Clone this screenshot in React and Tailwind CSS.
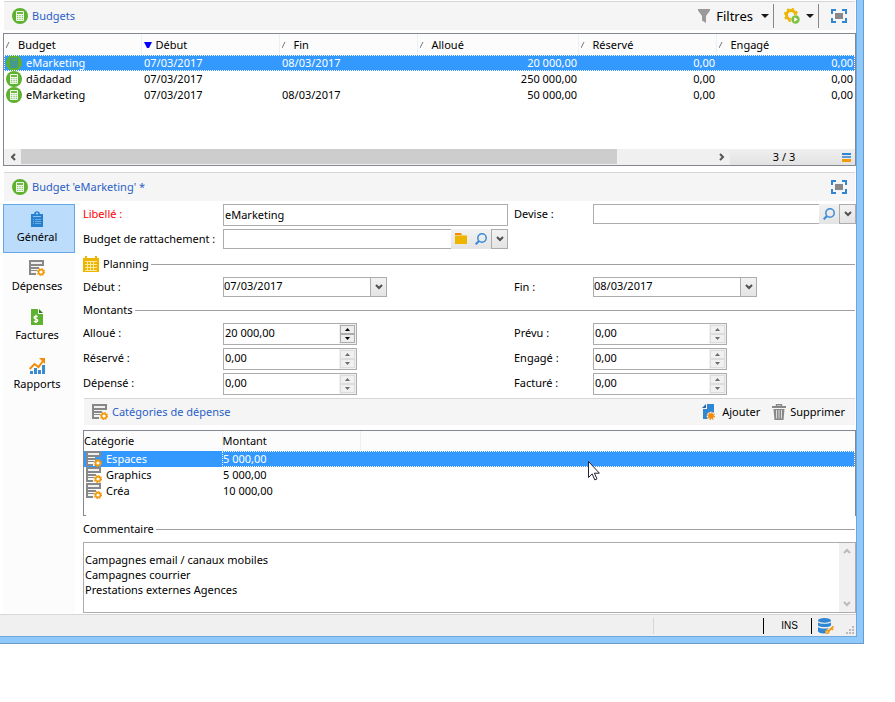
import React, { useState } from 'react';

/* ---------- Icons ---------- */

const CalculatorIcon = ({ dim = false }) => (
  <svg className="w-4 h-4 shrink-0" viewBox="0 0 16 16" aria-hidden="true">
    <circle cx="8" cy="8" r="8" fill="#5fb130" />
    <rect x="4" y="3" width="8" height="10" rx="1" fill={dim ? '#3f93a0' : '#f2faee'} />
    <rect x="5" y="4" width="6" height="2" fill={dim ? '#55a858' : '#6fba45'} />
    <g fill={dim ? '#55a858' : '#8cc96a'}>
      <rect x="5" y="7" width="1.3" height="1.2" />
      <rect x="7.4" y="7" width="1.3" height="1.2" />
      <rect x="9.7" y="7" width="1.3" height="1.2" />
      <rect x="5" y="9" width="1.3" height="1.2" />
      <rect x="7.4" y="9" width="1.3" height="1.2" />
      <rect x="9.7" y="9" width="1.3" height="1.2" />
      <rect x="5" y="11" width="1.3" height="1" />
      <rect x="7.4" y="11" width="1.3" height="1" />
      <rect x="9.7" y="11" width="1.3" height="1" />
    </g>
  </svg>
);

const FunnelIcon = () => (
  <svg className="w-3 h-4" viewBox="0 0 12 16" aria-hidden="true">
    <path d="M0 1h12v1.5L8 8v7l-4-2.5V8L0 2.5z" fill="#999" />
  </svg>
);

const Caret = () => (
  <svg className="w-2 h-1" viewBox="0 0 8 4" aria-hidden="true">
    <path d="M0 0h8L4 4z" fill="#1a1a1a" />
  </svg>
);

const GearPlayIcon = () => (
  <svg className="w-4 h-4" viewBox="0 0 16 16" aria-hidden="true">
    <circle cx="7" cy="7" r="4.5" fill="none" stroke="#edb500" strokeWidth="3" />
    <circle cx="7" cy="7" r="6.3" fill="none" stroke="#edb500" strokeWidth="1.6" strokeDasharray="2.4 2.55" />
    <circle cx="11.5" cy="11.5" r="4.8" fill="#f5f5f5" />
    <circle cx="11.5" cy="11.5" r="4.2" fill="#7dc242" />
    <path d="M10.2 9.2v4.6l3.6-2.3z" fill="#fff" />
  </svg>
);

const FullscreenIcon = () => (
  <svg className="w-4 h-3.5" viewBox="0 0 16 14" aria-hidden="true">
    <path d="M1 5V1h4M11 1h4v4M15 9v4h-4M5 13H1V9" fill="none" stroke="#2f86d2" strokeWidth="2" />
    <rect x="4" y="4" width="8" height="6" fill="#888" />
  </svg>
);

const ClipboardIcon = () => (
  <svg className="w-4 h-4" viewBox="0 0 16 16" aria-hidden="true">
    <path d="M2 3h3.200a2.800 2.800 0 0 1 5.600 0H14v13H2z" fill="#2580cf" />
    <circle cx="8" cy="2.500" r="1" fill="#bbdcfb" />
    <path d="M4 5.500h8" stroke="#8ec0ee" />
    <path d="M4 8.500h1M6 8.500h6M4 10.500h1M6 10.500h6M4 12.500h1M6 12.500h6" stroke="#6aabe4" />
  </svg>
);

const ExpenseIcon = () => (
  <svg className="w-4 h-4 shrink-0" viewBox="0 0 16 16" aria-hidden="true">
    <path d="M0 6h9v9H0z" fill="#f5f5f5" />
    <path d="M0 0h15v6H0z" fill="#888" />
    <path d="M2 2h11v2H2z" fill="#f0f0f0" />
    <path d="M0 6h2v9H0zM2 7h8v2H2zM2 10h6v1H2zM2 13h5v2H2z" fill="#888" />
    <circle cx="12" cy="12" r="2.400" fill="#fff" stroke="#f29a0c" strokeWidth="1.600" />
    <circle cx="12" cy="12" r="3.500" fill="none" stroke="#f29a0c" strokeWidth="1.200" strokeDasharray="1.400 1.350" />
  </svg>
);

const InvoiceIcon = () => (
  <svg className="w-4 h-4" viewBox="0 0 16 16" aria-hidden="true">
    <path d="M2 0h7v5h5v11H2z" fill="#5fb130" />
    <path d="M10 0l4 4h-4z" fill="#2f7d18" />
    <path d="M8.600 7.600C7.500 6.900 5 7 5 8.600c0 1.900 3.800 1 3.800 2.900 0 1.600-2.700 1.600-4 .8M6.900 5.800v8.200" fill="none" stroke="#fff" strokeWidth="1.300" />
  </svg>
);

const ReportIcon = () => (
  <svg className="w-4 h-4" viewBox="0 0 16 16" aria-hidden="true">
    <path d="M1 16v-3h3v3zM5 16v-6h3v6zM9 16v-4h3v4zM13 16V7h3v9z" fill="#3a8bd0" />
    <path d="M.7 11L5.500 6l4 3L14 3" fill="none" stroke="#f08c0a" strokeWidth="2" />
    <path d="M10 0h6v6z" fill="#f08c0a" />
  </svg>
);

const FolderIcon = () => (
  <svg className="w-3 h-3" viewBox="0 0 12 12" aria-hidden="true">
    <path d="M0 0h6l1 2H0z" fill="#f08c0a" />
    <path d="M0 2h12v1H0z" fill="#f3cf66" />
    <path d="M0 3h12v8H0z" fill="#edb500" />
  </svg>
);

const SearchIcon = () => (
  <svg className="w-3 h-3" viewBox="0 0 12 12" aria-hidden="true">
    <circle cx="7" cy="5" r="4.200" fill="none" stroke="#3a8bd8" strokeWidth="1.500" />
    <path d="M4 8L.7 11.300" stroke="#3a8bd8" strokeWidth="2" />
  </svg>
);

const ChevronIcon = () => (
  <svg className="w-2 h-2" viewBox="0 0 8 8" aria-hidden="true">
    <path d="M1 2l3 3L7 2" fill="none" stroke="#505050" strokeWidth="2" />
  </svg>
);

const CalendarIcon = () => (
  <svg className="w-4 h-4" viewBox="0 0 16 16" aria-hidden="true">
    <path d="M0 2h2V0h2v2h8V0h2v2h2v14H0z" fill="#edb500" />
    <path d="M2 5h12v1H2zM2 8h12v1H2zM2 11h12v1H2zM2 14h12v1H2zM4 5h1v10H4zM7 5h1v10H7zM10 5h1v10h-1z" fill="#fbe9a6" />
  </svg>
);

const AddPageIcon = () => (
  <svg className="w-3.5 h-4" viewBox="0 0 14 16" aria-hidden="true">
    <path d="M5 0h7v15H1V5h4z" fill="#2f86d2" />
    <path d="M4 0v4H0z" fill="#2f66a8" />
    <circle cx="9" cy="12" r="4.300" fill="#f5f5f5" />
    <circle cx="9" cy="12" r="2.800" fill="#f08c0a" />
    <circle cx="9" cy="12" r="3.300" fill="none" stroke="#f08c0a" strokeWidth="1.400" strokeDasharray="1.300 1.290" />
  </svg>
);

const TrashIcon = () => (
  <svg className="w-3.5 h-4" viewBox="0 0 14 16" aria-hidden="true">
    <path d="M4.500 2V.700h5V2" fill="none" stroke="#888" strokeWidth="1.400" />
    <path d="M0 2h14v2H0zM1.500 5h11l-1 11h-9z" fill="#888" />
    <path d="M4.500 6v8.500M7 6v8.500M9.500 6v8.500" stroke="#ddd" />
  </svg>
);

const MenuIcon = () => (
  <svg className="w-[9px] h-[9px]" viewBox="0 0 9 9" aria-hidden="true">
    <path d="M0 0h9v2H0z" fill="#2f86d2" />
    <path d="M0 3h9v2H0z" fill="#5a9cd6" />
    <path d="M0 6h9v3H0z" fill="#f09a0c" />
  </svg>
);

const DatabaseIcon = () => (
  <svg className="w-4 h-4" viewBox="0 0 16 16" aria-hidden="true">
    <ellipse cx="6.500" cy="2.400" rx="6.500" ry="2.400" fill="#2f86d2" />
    <path d="M0 4.200c2 2 11 2 13 0v3.200c-2 2-11 2-13 0z" fill="#2f86d2" />
    <path d="M0 9c2 2 11 2 13 0l-4.500 6.300C4 15.800 1 15 0 13.500z" fill="#2f86d2" />
    <path d="M15.500 8.500L10 13.500" stroke="#f0f0f0" strokeWidth="4" />
    <path d="M15.500 8.500L9.500 14M13.500 10.500l1.500 1.500" stroke="#f29a0c" strokeWidth="1.700" />
    <circle cx="9.300" cy="13.800" r="2.200" fill="#f29a0c" />
    <circle cx="9" cy="14" r=".7" fill="#fff" />
  </svg>
);

const GripIcon = () => (
  <svg className="w-2 h-2" viewBox="0 0 8 8" aria-hidden="true">
    <path d="M6 0h2v2H6zM3 3h2v2H3zM6 3h2v2H6zM0 6h2v2H0zM3 6h2v2H3zM6 6h2v2H6z" fill="#bbb" />
  </svg>
);

const ScrollArrow = ({ d, color = '#555' }) => (
  <svg className="w-2 h-2" viewBox="0 0 8 8" aria-hidden="true">
    <path d={d} fill="none" stroke={color} strokeWidth="2" />
  </svg>
);

/* ---------- Building blocks ---------- */

const PanelHeader = ({ title, children }) => (
  <header className="ml-1 mr-px h-[29px] flex items-center justify-between border-t border-[#d6d6d6] bg-[#f5f5f5] pl-2 pr-2">
    <h2 className="flex items-center gap-1 text-[#2b5fc7]">
      <CalculatorIcon />
      {title}
    </h2>
    <div className="flex items-center">{children}</div>
  </header>
);

const ArrowButton = ({ label }) => (
  <button
    type="button"
    aria-label={label}
    className="w-[17px] h-5 shrink-0 flex items-center justify-center border border-[#acacac] bg-linear-to-b from-[#f2f2f2] to-[#e4e4e4]"
  >
    <ChevronIcon />
  </button>
);

const LinkField = ({ id, withFolder = false }) => (
  <div className="flex h-5">
    <input id={id} type="text" className="min-w-0 flex-1 h-5 border border-r-0 border-[#acacac] bg-white px-0.5 outline-none" />
    {withFolder && (
      <button type="button" aria-label="Ouvrir" className="w-5 flex items-center justify-center bg-linear-to-b from-[#f2f2f2] to-[#e4e4e4]">
        <FolderIcon />
      </button>
    )}
    <button type="button" aria-label="Rechercher" className="w-5 flex items-center justify-center bg-linear-to-b from-[#f2f2f2] to-[#e4e4e4]">
      <SearchIcon />
    </button>
    <ArrowButton label="Dérouler" />
  </div>
);

const DateField = ({ id, value }) => (
  <div className="relative w-[164px] h-5">
    <select id={id} className="w-full h-5 appearance-none border border-[#acacac] bg-white pb-0.5 outline-none">
      <option>{value}</option>
    </select>
    <span className="absolute right-0 top-0 w-[17px] h-5 flex items-center justify-center border border-[#acacac] bg-linear-to-b from-[#f2f2f2] to-[#e4e4e4] pointer-events-none">
      <ChevronIcon />
    </span>
  </div>
);

const SpinField = ({ id, value, disabled = false }) => {
  const btn = disabled ? 'border-[#dcdcdc] bg-[#f0f0f0]' : 'border-[#acacac] bg-[#ededed]';
  const color = disabled ? '#6d6d6d' : '#000';

  return (
    <div className="flex w-[134px] h-[22px] border border-[#acacac] bg-white">
      <input id={id} type="text" defaultValue={value} readOnly={disabled} className="min-w-0 flex-1 pl-px pb-0.5 outline-none" />
      <div className="w-[17px] flex flex-col bg-[#f0f0f0] p-px">
        <button type="button" aria-label="Augmenter" disabled={disabled} className={`flex-1 flex items-center justify-center border ${btn}`}>
          <svg className="w-[5px] h-[3px]" viewBox="0 0 5 3"><path d="M0 3h5L2.500 0z" fill={color} /></svg>
        </button>
        <button type="button" aria-label="Diminuer" disabled={disabled} className={`flex-1 flex items-center justify-center border ${btn}`}>
          <svg className="w-[5px] h-[3px]" viewBox="0 0 5 3"><path d="M0 0h5L2.500 3z" fill={color} /></svg>
        </button>
      </div>
    </div>
  );
};

const Legend = ({ icon, children }) => (
  <h3 className="flex items-center gap-1 h-4">
    {icon}
    {children}
    <span className="-ml-0.5 flex-1 h-px mr-px bg-[#a0a0a0]" />
  </h3>
);

const FormRow = ({ children, className = '' }) => (
  <div className={`grid grid-cols-[140px_285px_85px_1fr] items-start ${className}`}>{children}</div>
);

/* ---------- Data ---------- */

const columns = ['Budget', 'Début', 'Fin', 'Alloué', 'Réservé', 'Engagé'];

const budgets = [
  { name: 'eMarketing', start: '07/03/2017', end: '08/03/2017', allocated: '20 000,00' },
  { name: 'dădadad', start: '07/03/2017', end: '', allocated: '250 000,00' },
  { name: 'eMarketing', start: '07/03/2017', end: '08/03/2017', allocated: '50 000,00' },
];

const sections = [
  { label: 'Général', icon: ClipboardIcon },
  { label: 'Dépenses', icon: ExpenseIcon },
  { label: 'Factures', icon: InvoiceIcon },
  { label: 'Rapports', icon: ReportIcon },
];

const amounts = [
  ['Alloué', '20 000,00', 'Prévu'],
  ['Réservé', '0,00', 'Engagé'],
  ['Dépensé', '0,00', 'Facturé'],
];

const categories = [
  ['Espaces', '5 000,00'],
  ['Graphics', '5 000,00'],
  ['Créa', '10 000,00'],
];

const comment = 'Campagnes email / canaux mobiles\nCampagnes courrier\nPrestations externes Agences';

/* ---------- Screens ---------- */

const BudgetList = () => {
  const [selected, setSelected] = useState(0);

  return (
    <div className="mt-[3px] ml-[3px] border border-[#828790]">
      <div className="h-[115px]">
        <table className="w-full table-fixed border-collapse">
          <colgroup>
            <col className="w-[137px]" />
            <col className="w-[138px]" />
            <col className="w-[138px]" />
            <col className="w-[161px]" />
            <col className="w-[138px]" />
            <col />
          </colgroup>
          <thead>
            <tr className="h-[21px] bg-[#fcfcfc]">
              {columns.map((column) => (
                <th key={column} className="p-0 text-left font-normal border-r border-[#e8f0fa] last:border-r-0">
                  <span className="flex items-center gap-1 pl-0.5">
                    {column === 'Début' ? (
                      <svg className="w-2 h-2" viewBox="0 0 8 8"><path d="M0 1h8L5 7H3z" fill="#00f" /></svg>
                    ) : (
                      <svg className="w-2 h-2" viewBox="0 0 8 8"><path d="M0 7L3 1" stroke="#777" fill="none" /></svg>
                    )}
                    {column}
                  </span>
                </th>
              ))}
            </tr>
          </thead>
          <tbody>
            {budgets.map((row, index) => (
              <tr
                key={index}
                onClick={() => setSelected(index)}
                className={`h-4 ${selected === index ? 'bg-[#3399ff] text-white outline-1 -outline-offset-1 outline-dotted outline-white' : ''}`}
              >
                <td className="p-0 pl-0.5">
                  <span className="flex items-center gap-1">
                    <CalculatorIcon dim={selected === index} />
                    {row.name}
                  </span>
                </td>
                <td className="p-0 pl-[3px]">{row.start}</td>
                <td className="p-0 pl-[3px]">{row.end}</td>
                <td className="p-0 pr-px text-right">{row.allocated}</td>
                <td className="p-0 pr-px text-right">0,00</td>
                <td className="p-0 pr-0.5 text-right">0,00</td>
              </tr>
            ))}
          </tbody>
        </table>
      </div>

      <div className="flex h-4 bg-[#f0f0f0]">
        <button type="button" aria-label="Défiler à gauche" className="w-[17px] flex items-center justify-center">
          <ScrollArrow d="M6 1L3 4l3 3" />
        </button>
        <div className="flex-1 flex">
          <div className="w-[86%] h-[15px] bg-[#cdcdcd]" />
        </div>
        <button type="button" aria-label="Défiler à droite" className="w-4 flex items-center justify-center">
          <ScrollArrow d="M2 1l3 3-3 3" />
        </button>
        <div className="w-[125px] flex items-center bg-linear-to-b from-[#f0f0f0] to-[#e2e2e2] pr-1">
          <span className="flex-1 pr-1 text-center">3 / 3</span>
          <MenuIcon />
        </div>
      </div>
    </div>
  );
};

const CategoryTable = () => (
  <div className="relative mt-[5px] h-[86px] border border-b-0 border-[#828790]">
    <table className="w-full table-fixed border-collapse">
      <colgroup>
        <col className="w-[138px]" />
        <col className="w-[138px]" />
        <col />
      </colgroup>
      <thead>
        <tr className="h-5 bg-[#fcfcfc] text-left">
          <th className="p-0 font-normal border-r border-[#e8f0fa]">Catégorie</th>
          <th className="p-0 font-normal border-r border-[#e8f0fa]">Montant</th>
          <th className="p-0" />
        </tr>
      </thead>
      <tbody>
        {categories.map(([name, amount], index) => (
          <tr key={name} className={`h-4 ${index === 0 ? 'bg-[#3399ff] text-white' : ''}`}>
            <td className="p-0 pl-0.5">
              <span className="flex items-center gap-1">
                <ExpenseIcon />
                {name}
              </span>
            </td>
            <td colSpan={2} className={`p-0 pl-px ${index === 0 ? 'outline-1 -outline-offset-1 outline-dotted outline-white' : ''}`}>
              {amount}
            </td>
          </tr>
        ))}
      </tbody>
    </table>
    <span className="absolute left-0 bottom-0 w-0.5 h-px bg-[#828790]" />
    <svg className="absolute left-[504px] top-[30px] w-3 h-5" viewBox="0 0 12 20" aria-hidden="true">
      <path d="M.5.500v16l3.700-3.600 2.600 6 2.200-1-2.600-5.700h5z" fill="#fff" stroke="#223" />
    </svg>
  </div>
);

const BudgetForm = () => (
  <form className="flex-1 min-w-0 flex flex-col">
    <FormRow>
      <label htmlFor="label" className="py-0.5 text-[#ff0000]">Libellé :</label>
      <input id="label" type="text" defaultValue="eMarketing" className="h-[22px] border border-[#acacac] bg-white px-px pb-0.5 outline-none" />
      <label htmlFor="currency" className="pl-1.5 py-0.5">Devise :</label>
      <LinkField id="currency" />
    </FormRow>
    <FormRow className="mt-[3px]">
      <label htmlFor="parent" className="py-0.5">Budget de rattachement :</label>
      <LinkField id="parent" withFolder />
    </FormRow>

    <div className="mt-[7px]">
      <Legend icon={<CalendarIcon />}>Planning</Legend>
    </div>
    <FormRow className="mt-[5px]">
      <label htmlFor="start" className="py-0.5">Début :</label>
      <DateField id="start" value="07/03/2017" />
      <label htmlFor="end" className="pl-1.5 py-0.5">Fin :</label>
      <DateField id="end" value="08/03/2017" />
    </FormRow>

    <div className="mt-[5px] mb-[5px]">
      <Legend>Montants</Legend>
    </div>
    <div className="flex flex-col gap-[3px]">
      {amounts.map(([left, value, right], index) => (
        <FormRow key={left}>
          <label htmlFor={left} className="py-0.5">{left} :</label>
          <SpinField id={left} value={value} disabled={index > 0} />
          <label htmlFor={right} className="pl-1.5 py-0.5">{right} :</label>
          <SpinField id={right} value="0,00" disabled />
        </FormRow>
      ))}
    </div>

    <div className="mt-[3px] ml-px mr-px h-[27px] flex items-center justify-between border-t border-[#d6d6d6] bg-[#f5f5f5] pl-2 pr-2.5">
      <h3 className="flex items-center gap-1 text-[#2b5fc7]">
        <ExpenseIcon />
        Catégories de dépense
      </h3>
      <div className="flex items-center gap-3">
        <button type="button" className="flex items-center gap-1.5">
          <AddPageIcon />
          Ajouter
        </button>
        <button type="button" className="flex items-center gap-1">
          <TrashIcon />
          Supprimer
        </button>
      </div>
    </div>
    <CategoryTable />

    <div className="mt-[5px]">
      <Legend><label htmlFor="comment">Commentaire</label></Legend>
    </div>
    <div className="mt-[5px] flex h-[71px] border border-[#acacac] bg-white">
      <textarea id="comment" defaultValue={comment} className="flex-1 resize-none overflow-hidden pl-px pt-[9px] leading-[15px] outline-none" />
      <div className="w-4 flex flex-col items-center justify-between bg-[#f0f0f0] py-1">
        <ScrollArrow d="M1 6l3-3 3 3" color="#bbb" />
        <ScrollArrow d="M1 2l3 3 3-3" color="#bbb" />
      </div>
    </div>
  </form>
);

const App = () => {
  const [section, setSection] = useState('Général');

  return (
    <div className="min-h-screen bg-white pr-[31px] font-['Noto_Sans','Open_Sans',sans-serif] text-[11px] leading-4 text-black">
      <div className="border-r border-b border-[#6b9cc9] bg-[#8fc8fb] pr-1.5 pb-1.5">
        <div className="border-r border-b border-[#6ea6dc] bg-white pt-px">
          <PanelHeader title="Budgets">
            <button type="button" className="flex items-center text-[13px]">
              <FunnelIcon />
              <span className="ml-1.5 mr-2">Filtres</span>
              <Caret />
            </button>
            <span className="ml-1 w-px h-6 bg-[#888]" />
            <button type="button" aria-label="Actions" className="ml-2.5 flex items-center gap-1.5">
              <GearPlayIcon />
              <Caret />
            </button>
            <span className="ml-1 mr-3 w-px h-6 bg-[#888]" />
            <button type="button" aria-label="Agrandir"><FullscreenIcon /></button>
          </PanelHeader>
          <BudgetList />

          <div className="mt-1.5">
            <PanelHeader title="Budget 'eMarketing' *">
              <button type="button" aria-label="Agrandir"><FullscreenIcon /></button>
            </PanelHeader>
          </div>

          <div className="mt-[3px] ml-[3px] flex gap-2">
            <nav className="w-[72px] shrink-0 bg-[#fcfcfc]">
              {sections.map(({ label, icon: Icon }) => (
                <button
                  key={label}
                  type="button"
                  onClick={() => setSection(label)}
                  className={`w-full h-[49px] flex flex-col items-center justify-center border pr-1 pb-0.5 ${
                    section === label ? 'border-[#66a7e8] bg-[#bbdcfb]' : 'border-transparent'
                  }`}
                >
                  <Icon />
                  <span className="mt-0.5">{label}</span>
                </button>
              ))}
            </nav>
            <BudgetForm />
          </div>

          <footer className="mt-px h-[22px] flex items-center justify-end border-t border-[#d6d6d6] bg-[#f0f0f0] font-['Liberation_Sans',Arial,sans-serif] text-[10px]">
            <span className="w-px h-4 bg-[#d6d6d6]" />
            <span className="ml-[109px] w-px h-4 bg-black" />
            <span className="w-[47px] pl-1 text-center">INS</span>
            <span className="w-px h-4 mr-1.5 bg-black" />
            <DatabaseIcon />
            <span className="ml-3 mr-0.5 self-end pb-0.5"><GripIcon /></span>
          </footer>
        </div>
      </div>
    </div>
  );
};

export default App;
